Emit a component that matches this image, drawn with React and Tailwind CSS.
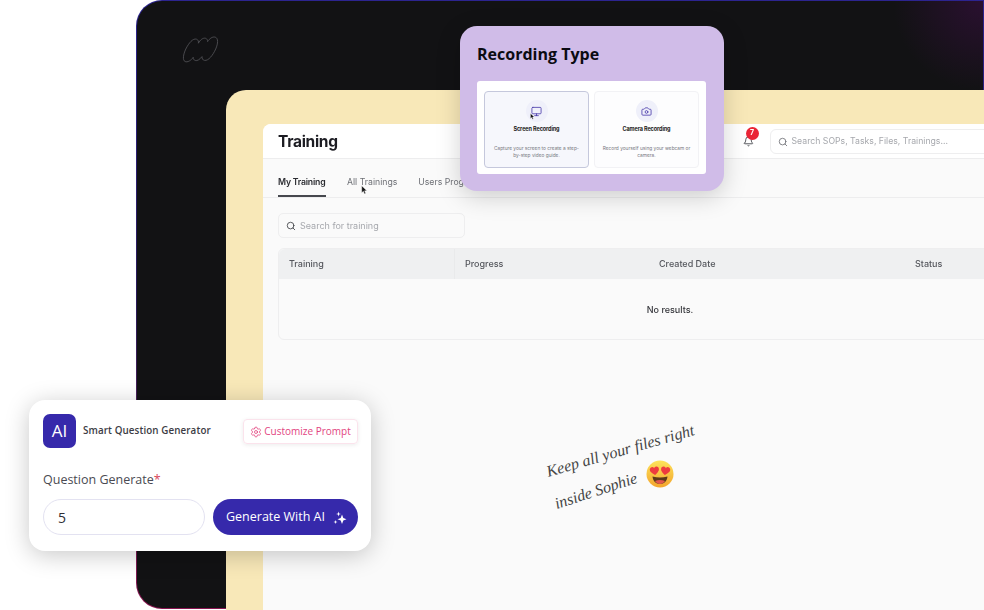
import { Bell, Search, Settings, Monitor, Camera } from 'lucide-react';

const jakarta = 'font-["Inter","Liberation_Sans",sans-serif]';

function Cursor({ className }) {
    return (
        <svg viewBox="0 0 10 14" className={className}>
            <path d="M1 1v10l2.400-2.200L5 12.600l1.700-.8-1.600-3.600H8.400z" fill="#111" stroke="#fff" strokeWidth="0.6" />
        </svg>
    );
}

function Logo() {
    return (
        <svg viewBox="0 0 38 28" className="w-[38px] h-[28px]" fill="none" stroke="#4f4f54" strokeWidth="0.9">
            <path d="M3 25.500c-2.600-1.400-1.800-7 .8-12.500C6.800 7 11 2 14.500 3.200c1.800.6 2.200 2.400 1.900 4 1.700-3.300 4.800-5.700 7.200-4.900 1.500.5 2 1.800 2 3.300 1.900-3 5-5.300 7.700-4.400 3 1 2.900 6.100.4 11.800-2.700 6-7.200 12-11.200 11.400-1.900-.3-2.600-2-2.500-3.800-2.100 2.700-4.700 4.600-6.800 3.900-1.500-.5-2-1.800-2-3.200C9.500 24.200 5.300 26.800 3 25.500z" />
        </svg>
    );
}

function HeartEyes() {
    const heart = 'M0 4.500C-3.600 2-4.600.4-4.600-1.200c0-1.500 1.100-2.500 2.400-2.500 1 0 1.800.5 2.200 1.400.4-.9 1.200-1.400 2.200-1.400 1.300 0 2.400 1 2.400 2.500C4.600.4 3.600 2 0 4.500z';
    return (
        <svg viewBox="0 0 28 28" className="w-[28px] h-[28px]">
            <defs>
                <linearGradient id="face" x1="0" y1="0" x2="0" y2="1">
                    <stop offset="0" stopColor="#fde35a" />
                    <stop offset="1" stopColor="#f3a42c" />
                </linearGradient>
            </defs>
            <circle cx="14" cy="14" r="13.500" fill="url(#face)" />
            <path d="M6.500 16.500c5 1.200 10 1.200 15 0-.3 4.500-3.400 7.500-7.500 7.500s-7.200-3-7.500-7.500z" fill="#5d3a1a" />
            <path d="M9 21c3-1.200 7-1.200 10 0-1.200 2-3 3-5 3s-3.800-1-5-3z" fill="#e2574c" />
            <path d={heart} fill="#ee3b3f" transform="translate(8.500 10.500) rotate(-8)" />
            <path d={heart} fill="#ee3b3f" transform="translate(19.500 10.500) rotate(8)" />
        </svg>
    );
}

function AiSparkles() {
    return (
        <svg viewBox="0 0 14 14" className="w-[14px] h-[14px]" fill="currentColor">
            <path d="M9 3.500 10.300 7 13.500 8.300 10.300 9.600 9 13 7.700 9.600 4.500 8.300 7.700 7z" />
            <path d="M5.500 .5 6.100 2.400 8 3 6.100 3.600 5.500 5.500 4.900 3.600 3 3 4.900 2.400z" />
            <path d="M2.500 9 3 10.500 4.500 11 3 11.500 2.500 13 2 11.500 .5 11 2 10.500z" />
        </svg>
    );
}

function RecordingOption({ icon: Icon, title, desc, active }) {
    return (
        <div className={`w-[105px] h-[77px] rounded-[4px] border flex flex-col items-center pt-[8px] ${active ? 'border-[#c5c8dc] bg-[#f6f7fc]' : 'border-[#f2f2f5] bg-[#fdfdfe]'}`}>
            <div className="relative w-[22px] h-[22px] rounded-full bg-[#eff0fa] flex items-center justify-center">
                <Icon className="w-[11px] h-[11px] text-[#4a3cab]" strokeWidth={1.8} />
                {active && <Cursor className="absolute left-[4px] top-[13px] w-[5px] h-[7px]" />}
            </div>
            <div className={`${jakarta} mt-[3px] text-[5.500px] leading-[8px] font-bold text-[#1b1b20] tracking-[-0.1px]`}>{title}</div>
            <div className={`${jakarta} mt-[12px] px-[7px] text-center text-[4.800px] leading-[7px] text-[#77777f]`}>{desc}</div>
        </div>
    );
}

function RecordingCard() {
    return (
        <div className="absolute left-[460px] top-[26px] w-[264px] h-[165px] rounded-[17px] bg-[#d0bce8] shadow-[0_6px_24px_rgba(0,0,0,0.18)] px-[17px] pt-[17px] font-['Open_Sans',sans-serif]">
            <div className="text-[16px] leading-[23px] font-bold text-[#0b0b12]">Recording Type</div>
            <div className="mt-[15px] w-[229px] h-[93px] bg-white rounded-[3px] flex gap-[5px] pl-[7px] pt-[10px]">
                <RecordingOption active icon={Monitor} title="Screen Recording" desc="Capture your screen to create a step-by-step video guide." />
                <RecordingOption icon={Camera} title="Camera Recording" desc="Record yourself using your webcam or camera." />
            </div>
        </div>
    );
}

function QuestionCard() {
    return (
        <div className="absolute left-[29px] top-[400px] w-[342px] h-[151px] rounded-[16px] bg-white shadow-[0_4px_24px_rgba(0,0,0,0.22)] pl-[14px] pr-[13px] pt-[14px] font-['Open_Sans',sans-serif]">
            <div className="flex items-center">
                <div className="w-[33px] h-[34px] rounded-[7px] bg-[#3629ab] text-white text-[17px] font-medium flex items-center justify-center">AI</div>
                <div className="ml-[7px] text-[9.800px] font-semibold text-[#3c3c44] tracking-[0.1px] mt-[1px]">Smart Question Generator</div>
                <div className="ml-auto flex items-center gap-[2px] h-[25px] w-[115px] justify-center rounded-[4px] border border-[#fbe3ec] shadow-[0_1px_4px_rgba(0,0,0,0.08)] text-[#e2457f] text-[10px] mt-[1px]">
                    <Settings className="w-[12px] h-[12px]" strokeWidth={1.6} />
                    Customize Prompt
                </div>
            </div>
            <div className="mt-[23px] text-[12.500px] leading-[18px] text-[#4a4a52]">
                Question Generate<span className="text-[#d9455a]">*</span>
            </div>
            <div className="mt-[10px] flex gap-[8px]">
                <div className="w-[162px] h-[36px] rounded-full border border-[#e3e2f1] flex items-center pl-[14px] text-[14px] text-[#2f2f36]">5</div>
                <div className="w-[145px] h-[36px] pt-px pl-[2px] rounded-full bg-[#3629ab] text-white text-[12.500px] font-medium flex items-center justify-center gap-[8px]">
                    Generate With AI
                    <AiSparkles />
                </div>
            </div>
        </div>
    );
}

function AppPreview() {
    return (
        <div className={`${jakarta} w-[784px] flex-1 bg-[#fafafa] rounded-tl-[8px] blur-[0.4px]`}>
            <div className="h-[35px] pt-px bg-white rounded-tl-[8px] border-b border-[#ededee] flex items-center pl-[15px]">
                <div className="text-[15.500px] font-bold text-[#1c1c22] tracking-[-0.3px] w-[474px]">Training</div>
                <div className="relative ml-[-5px] mr-[16px]">
                    <Bell className="w-[11px] h-[11px] text-[#33353b]" strokeWidth={1.8} />
                    <div className="absolute left-[3px] -top-[9px] w-[13px] h-[13px] rounded-full bg-[#ea2536] text-white text-[7px] font-bold flex items-center justify-center">7</div>
                </div>
                <div className="w-[280px] h-[25px] rounded-[6px] border border-[#eeeeef] flex items-center pl-[7px] gap-[4px] text-[8.700px] text-[#a6a8ad]">
                    <Search className="w-[10px] h-[10px] text-[#6c6e74]" />
                    Search SOPs, Tasks, Files, Trainings...
                </div>
            </div>
            <div className="h-[39px] border-b border-[#ededee] pl-[15px] flex gap-[21px] text-[8.700px]">
                <div className="h-full pt-[17px] border-b-2 border-[#46484e] w-[48px] font-semibold text-[#2a2b30] whitespace-nowrap tracking-[-0.2px]">My Training</div>
                <div className="relative pt-[17px] text-[#6e7076] whitespace-nowrap">
                    All Trainings
                    <Cursor className="absolute left-[14px] top-[26px] w-[7px] h-[10px]" />
                </div>
                <div className="pt-[17px] text-[#6e7076] whitespace-nowrap">Users Progress</div>
            </div>
            <div className="pl-[15px] pt-[15px]">
                <div className="w-[187px] h-[25px] rounded-[5px] border border-[#eeeeef] flex items-center pl-[7px] gap-[4px] text-[9px] text-[#a6a8ad]">
                    <Search className="w-[10px] h-[10px] text-[#3b3d42]" />
                    Search for training
                </div>
                <div className="mt-[10px] w-[784px] h-[92px] rounded-[6px] border border-[#eeeeef]">
                    <div className="h-[30px] bg-[#eff0f1] rounded-t-[6px] flex items-center text-[9px] font-medium text-[#55575d]">
                        <div className="w-[176px] h-full pl-[10px] flex items-center border-r border-[#e9eaeb]">Training</div>
                        <div className="w-[194px] pl-[10px]">Progress</div>
                        <div className="w-[256px] pl-[10px]">Created Date</div>
                        <div className="pl-[10px]">Status</div>
                    </div>
                    <div className="w-full h-[60px] pt-[2px] flex items-center justify-center text-[9px] font-medium text-[#35363b]">No results.</div>
                </div>
            </div>
        </div>
    );
}

export default function App() {
    return (
        <div className="relative w-[984px] h-[610px] bg-white overflow-hidden">
            <div className="ml-[136px] w-[848px] h-[609px] rounded-l-[26px] p-px bg-gradient-to-b from-[#2c2490] via-[#2a1a5a] to-[#8a1450]">
                <div className="h-full rounded-l-[25px] bg-[#121214] bg-[radial-gradient(circle_at_100%_0%,#2a1030_0,#121214_90px)] pl-[45px] pt-[35px] flex flex-col">
                    <Logo />
                    <div className="mt-[26px] -mb-[2px] ml-[44px] w-[759px] flex-1 rounded-tl-[20px] bg-[#f8e8b8] pl-[37px] pt-[34px] flex flex-col overflow-hidden">
                        <AppPreview />
                    </div>
                </div>
            </div>

            <RecordingCard />
            <QuestionCard />

            <div className="absolute left-[544px] top-[443px] -rotate-[16deg] font-[family-name:cursive] italic text-[16px] leading-[16px] text-[#444] whitespace-nowrap">Keep all your files right</div>
            <div className="absolute left-[553px] top-[483px] -rotate-[18deg] font-[family-name:cursive] italic text-[16px] leading-[16px] text-[#444] whitespace-nowrap">inside Sophie</div>
            <div className="absolute left-[646px] top-[460px]"><HeartEyes /></div>
        </div>
    );
}
